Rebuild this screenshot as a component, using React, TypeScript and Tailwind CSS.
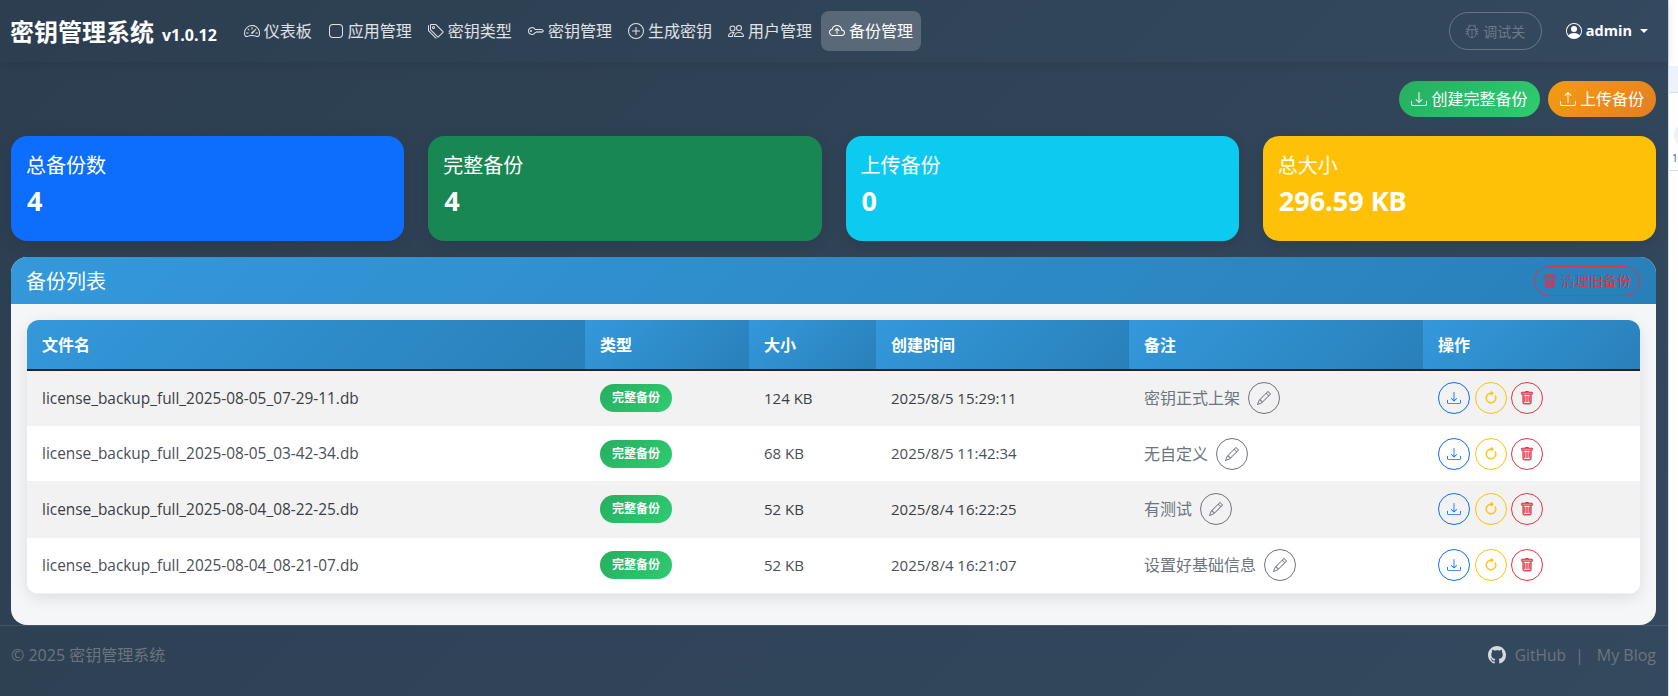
import React from "react";
import {
  BsSpeedometer2, BsApp, BsTags, BsKey, BsPlusCircle, BsPeople, BsCloudArrowUp, BsBug,
  BsPersonCircle, BsDownload, BsUpload, BsTrash, BsArrowClockwise, BsPencil, BsGithub,
} from "react-icons/bs";

const nav = [
  { label: "仪表板", Icon: BsSpeedometer2 },
  { label: "应用管理", Icon: BsApp },
  { label: "密钥类型", Icon: BsTags },
  { label: "密钥管理", Icon: BsKey },
  { label: "生成密钥", Icon: BsPlusCircle },
  { label: "用户管理", Icon: BsPeople },
];

const stats = [
  { title: "总备份数", value: "4", bg: "bg-[#0d6efd]" },
  { title: "完整备份", value: "4", bg: "bg-[#198754]" },
  { title: "上传备份", value: "0", bg: "bg-[#0dcaf0]" },
  { title: "总大小", value: "296.59 KB", bg: "bg-[#ffc107]" },
];

const rows = [
  { file: "license_backup_full_2025-08-05_07-29-11.db", size: "124 KB", time: "2025/8/5 15:29:11", note: "密钥正式上架" },
  { file: "license_backup_full_2025-08-05_03-42-34.db", size: "68 KB", time: "2025/8/5 11:42:34", note: "无自定义" },
  { file: "license_backup_full_2025-08-04_08-22-25.db", size: "52 KB", time: "2025/8/4 16:22:25", note: "有测试" },
  { file: "license_backup_full_2025-08-04_08-21-07.db", size: "52 KB", time: "2025/8/4 16:21:07", note: "设置好基础信息" },
];

const heads = ["文件名", "类型", "大小", "创建时间", "备注", "操作"];

export default function App() {
  return (
    <div className="flex w-full h-[696px] overflow-hidden bg-white font-['Open_Sans','Noto_Sans_CJK_SC',sans-serif]">
      <div className="w-[1668px] shrink-0 flex flex-col bg-[linear-gradient(135deg,#2c3e50,#34495e)]">
        <header className="h-[62px] shrink-0 flex items-center pl-[10px] pr-[20px] bg-[linear-gradient(135deg,#2c3e50,#34495e)] shadow-[0_2px_10px_rgba(0,0,0,0.1)] relative">
          <div className="flex items-baseline text-white font-bold mr-[19px] mt-[1px]">
            <span className="text-[24px] leading-[36px]">密钥管理系统</span>
            <span className="text-[16px] ml-[8px]">v1.0.12</span>
          </div>
          <nav className="flex items-center">
            {nav.map(({ label, Icon }) => (
              <a key={label} className="h-[40px] px-[8px] flex items-center gap-[4px] text-[16px] text-white/85">
                <Icon className="w-[16px] h-[16px]" />
                {label}
              </a>
            ))}
            <a className="h-[40px] px-[8px] ml-[1px] flex items-center gap-[4px] text-[16px] text-white rounded-lg bg-white/20">
              <BsCloudArrowUp className="w-[16px] h-[16px]" />
              备份管理
            </a>
          </nav>
          <div className="ml-auto flex items-center">
            <button className="h-[38px] w-[93px] flex items-center justify-center gap-[4px] rounded-full border border-white/25 text-[14px] text-[#6c7a89]">
              <BsBug className="w-[14px] h-[14px]" />
              调试关
            </button>
            <div className="ml-[24px] flex items-center text-white font-bold text-[14.5px]">
              <BsPersonCircle className="w-[16px] h-[16px] mr-[4px]" />
              admin
              <span className="ml-[8px] border-x-[4px] border-x-transparent border-t-[4px] border-t-white" />
            </div>
          </div>
        </header>

        <main className="pl-[11px] pr-[12px] pt-[19px]">
          <div className="flex justify-end gap-[8px]">
            <button className="h-[36px] w-[141px] flex items-center justify-center gap-[4px] rounded-full text-white text-[16px] bg-[linear-gradient(135deg,#27ae60,#2ecc71)]">
              <BsDownload className="w-[16px] h-[16px]" />
              创建完整备份
            </button>
            <button className="h-[36px] w-[108px] flex items-center justify-center gap-[4px] rounded-full text-white text-[16px] bg-[linear-gradient(135deg,#f39c12,#e67e22)]">
              <BsUpload className="w-[16px] h-[16px]" />
              上传备份
            </button>
          </div>

          <div className="mt-[19px] grid grid-cols-4 gap-[24px]">
            {stats.map((s) => (
              <div key={s.title} className={`h-[105px] rounded-[16px] pl-[16px] pt-[17px] text-white shadow-[0_4px_15px_rgba(0,0,0,0.1)] ${s.bg}`}>
                <div className="text-[20px] leading-[26px] -ml-[1px]">{s.title}</div>
                <div className="mt-[5px] text-[27px] leading-[34px] font-bold">{s.value}</div>
              </div>
            ))}
          </div>

          <section className="mt-[16px] rounded-[16px] overflow-hidden bg-[#f5f6f8]">
            <div className="h-[47px] flex items-center justify-between pl-[15px] pr-[16px] text-white bg-[linear-gradient(135deg,#3498db,#2980b9)]">
              <h2 className="text-[20px] font-normal mt-[2px]">备份列表</h2>
              <button className="h-[30px] w-[106px] flex items-center justify-center gap-[4px] rounded-full border border-[#dc3545] text-[#dc3545] text-[14px]">
                <BsTrash className="w-[14px] h-[14px] [stroke-width:0.5px]" />
                清理旧备份
              </button>
            </div>
            <div className="p-[16px] pb-[31px]">
              <div className="rounded-[12px] overflow-hidden bg-white shadow-[0_4px_15px_rgba(0,0,0,0.1)]">
                <table className="w-full table-fixed border-collapse">
                  <colgroup>
                    <col className="w-[558px]" />
                    <col className="w-[164px]" />
                    <col className="w-[127px]" />
                    <col className="w-[253px]" />
                    <col className="w-[294px]" />
                    <col className="w-[217px]" />
                  </colgroup>
                  <thead>
                    <tr className="h-[50px] border-b-2 border-[#212529]">
                      {heads.map((h) => (
                        <th key={h} className="px-[15px] text-left text-[16px] font-bold text-white bg-[linear-gradient(135deg,#3498db,#2980b9)]">{h}</th>
                      ))}
                    </tr>
                  </thead>
                  <tbody>
                    {rows.map((r, i) => (
                      <tr key={r.file} className={`h-[55.75px] border-b border-[#f0f1f2] text-[15px] ${i % 2 === 0 ? "bg-[#f2f2f2] text-[#3a3f45]" : "bg-white text-[#495057]"}`}>
                        <td className="px-[15px] text-[15.4px]">{r.file}</td>
                        <td className="px-[15px]">
                          <span className="inline-flex items-center justify-center h-[28px] w-[72px] rounded-full text-white text-[12px] font-bold bg-[linear-gradient(135deg,#27ae60,#2ecc71)]">完整备份</span>
                        </td>
                        <td className="px-[15px]">{r.size}</td>
                        <td className="px-[15px]">{r.time}</td>
                        <td className="px-[15px]">
                          <div className="flex items-center gap-[8px] text-[16px] text-[#6c757d]">
                            {r.note}
                            <span className="w-[32px] h-[32px] flex items-center justify-center rounded-full border border-[#6c757d]">
                              <BsPencil className="w-[14px] h-[14px]" />
                            </span>
                          </div>
                        </td>
                        <td className="px-[15px]">
                          <div className="flex items-center gap-[4.5px]">
                            <span className="w-[32px] h-[32px] flex items-center justify-center rounded-full border border-[#0d6efd] text-[#0d6efd]">
                              <BsDownload className="w-[14px] h-[14px]" />
                            </span>
                            <span className="w-[32px] h-[32px] flex items-center justify-center rounded-full border border-[#ffc107] text-[#ffc107]">
                              <BsArrowClockwise className="w-[14px] h-[14px] [stroke-width:0.6px]" />
                            </span>
                            <span className="w-[32px] h-[32px] flex items-center justify-center rounded-full border border-[#dc3545] text-[#dc3545]">
                              <BsTrash className="w-[14px] h-[14px] [stroke-width:0.5px]" />
                            </span>
                          </div>
                        </td>
                      </tr>
                    ))}
                  </tbody>
                </table>
              </div>
            </div>
          </section>
        </main>

        <footer className="flex-1 border-t border-white/10 pl-[11px] pr-[12px] pb-[11px] flex items-center justify-between text-[16px] text-[#6c757d]">
          <span>© 2025 密钥管理系统</span>
          <div className="flex items-center">
            <BsGithub className="w-[18px] h-[18px] text-[#d5dadf] mr-[9px]" />
            <span className="text-[15.5px]">GitHub</span>
            <span className="ml-[9px] mr-[13px]">|</span>
            <span>My Blog</span>
          </div>
        </footer>
      </div>

      <aside className="flex-1 overflow-hidden border-l border-[#cfe0f5] bg-white">
        <div className="mt-[66px] h-[27px] bg-[#eef2fb] border-b border-[#cfdff5]" />
        <div className="mt-[30px] ml-[5px] w-[24px] h-[24px] rounded-full bg-[#eef0f6]" />
        <div className="ml-[3px] mt-[1px] text-[10px] leading-[20px] text-[#3a5a7a]">1</div>
        <div className="mt-[2px] h-px bg-[#cfdff5]" />
      </aside>
    </div>
  );
}
